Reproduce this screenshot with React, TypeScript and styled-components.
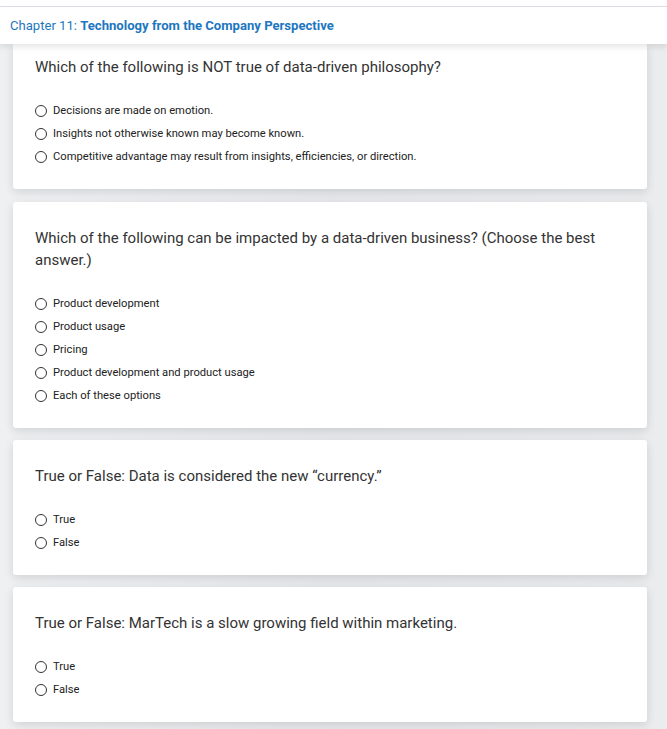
import React from "react";
import styled, { createGlobalStyle } from "styled-components";

const GlobalStyle = createGlobalStyle`
  html, body {
    margin: 0;
    padding: 0;
    background: #eceef0;
    font-family: Roboto, "Liberation Sans", Arial, sans-serif;
  }
`;

const Page = styled.div`
  display: flex;
  flex-direction: column;
  min-height: 729px;
  background: linear-gradient(90deg, #eef0f2 0%, #e6e8eb 50%, #eaecee 100%);
`;

const TopStrip = styled.div`
  height: 6px;
  background: #fff;
  border-bottom: 1px solid #dcdfe3;
`;

const Header = styled.header`
  height: 37px;
  display: flex;
  align-items: center;
  padding: 0 10px;
  background: #fff;
  box-shadow: 0 3px 6px rgba(0, 0, 0, 0.1);
  position: relative;
  z-index: 2;
  font-size: 13.1px;
  color: #1d77c0;

  b {
    font-weight: 700;
  }
`;

const List = styled.div`
  display: flex;
  flex-direction: column;
  gap: 12px;
  padding: 0 20px 7px 13px;
`;

const Card = styled.section<{ cut?: boolean }>`
  background: #fff;
  border-radius: ${(p) => (p.cut ? "0 0 3px 3px" : "3px")};
  box-shadow: 0 3px 10px rgba(0, 0, 0, 0.12);
  padding: ${(p) => (p.cut ? "12px 22px 21px" : "25px 22px 21px")};
  margin-bottom: ${(p) => (p.cut ? "1px" : "0")};
`;

const Question = styled.p`
  margin: 0 0 21px;
  font-size: 15px;
  line-height: 22px;
  color: #333;
  padding-right: 20px;
`;

const Options = styled.div`
  display: flex;
  flex-direction: column;
`;

const Option = styled.label`
  display: flex;
  align-items: center;
  gap: 6px;
  height: 23px;
  font-size: 11.2px;
  color: #222;
`;

const Radio = styled.span`
  width: 10px;
  height: 10px;
  border: 1.4px solid #333;
  border-radius: 50%;
  flex: none;
`;

const questions = [
  {
    q: "Which of the following is NOT true of data-driven philosophy?",
    opts: [
      "Decisions are made on emotion.",
      "Insights not otherwise known may become known.",
      "Competitive advantage may result from insights, efficiencies, or direction.",
    ],
  },
  {
    q: "Which of the following can be impacted by a data-driven business? (Choose the best answer.)",
    opts: [
      "Product development",
      "Product usage",
      "Pricing",
      "Product development and product usage",
      "Each of these options",
    ],
  },
  {
    q: "True or False: Data is considered the new \u201Ccurrency.\u201D",
    opts: ["True", "False"],
  },
  {
    q: "True or False: MarTech is a slow growing field within marketing.",
    opts: ["True", "False"],
  },
];

const App = () => {
  return (
    <Page>
      <GlobalStyle />
      <TopStrip />
      <Header>
        Chapter 11:&nbsp;<b>Technology from the Company Perspective</b>
      </Header>
      <List>
        {questions.map((item, i) => (
          <Card key={i} cut={i === 0}>
            <Question>{item.q}</Question>
            <Options>
              {item.opts.map((o) => (
                <Option key={o}>
                  <Radio />
                  {o}
                </Option>
              ))}
            </Options>
          </Card>
        ))}
      </List>
    </Page>
  );
};

export default App;
